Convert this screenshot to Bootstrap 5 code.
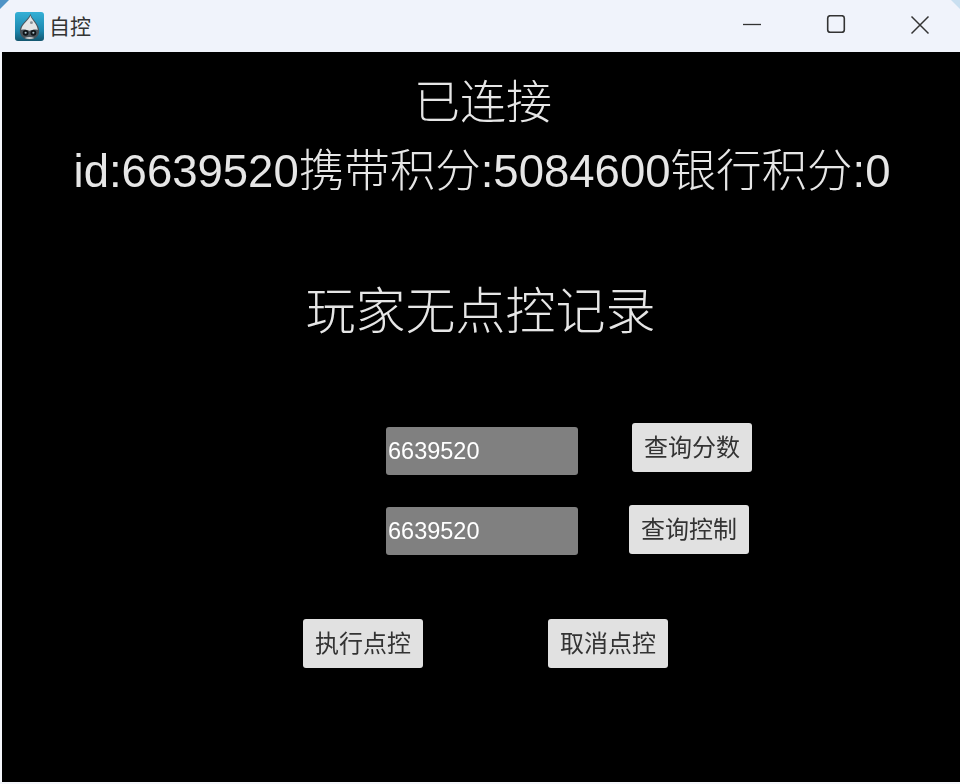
<!DOCTYPE html>
<html lang="zh">
<head>
<meta charset="utf-8">
<title>自控</title>
<link href="https://cdn.jsdelivr.net/npm/bootstrap@5.3.0/dist/css/bootstrap.min.css" rel="stylesheet">
<style>
html,body{margin:0;height:784px;overflow:hidden;background:#f4f6fb;}
body{font-family:"Liberation Sans","Noto Sans CJK SC",sans-serif;}
.app-window{width:960px;height:784px;position:relative;overflow:hidden;}
.corner-tl,.corner-tr{position:absolute;top:0;width:9px;height:9px;}
.corner-tl{left:0;background:#4f93c6;clip-path:polygon(0 0,100% 0,0 100%);}
.corner-tr{right:0;background:#c9dff0;clip-path:polygon(0 0,100% 0,100% 100%);}
.title-strip{height:52px;background:#f0f3fb;padding-left:15px;}
.title-text{font-size:21px;color:#333;margin-left:5px;line-height:1;}
.win-ctrl{height:52px;background:none;border:0;padding:0;}
.win-min{width:86px;}
.win-max{width:82px;}
.win-close{width:86px;margin-right:-3px;}
.stage{height:730px;background:#000;margin-left:2px;color:#e6e6e6;padding-top:24px;filter:blur(.35px);}
.line-a,.line-b,.line-c{text-align:center;margin:0;font-weight:300;white-space:nowrap;}
.line-a{font-size:46px;line-height:52px;margin-left:4px;}
.line-b{font-size:45.5px;line-height:52px;margin-top:18px;margin-left:2px;}
.line-c{font-size:50px;line-height:60px;margin-top:84px;margin-left:-1px;}
.query-row{padding-left:384px;}
.row-one{margin-top:81px;height:52px;}
.row-two{margin-top:30px;height:50px;}
.score-box{width:192px;height:48px;background:#808080;color:#fff;border:0;border-radius:3px;padding:0 2px;font-size:23.5px;font-family:inherit;}
.score-box:focus{outline:0;}
.pale-btn{width:120px;height:49px;background:#e1e1e1;color:#333;border:0;border-radius:3px;padding:0;font-size:24px;font-family:inherit;line-height:1;}
.gap-one{margin-left:54px;}
.gap-two{margin-left:51px;}
.action-row{padding-left:301px;margin-top:64px;}
.gap-three{margin-left:125px;}
</style>
</head>
<body>
<div class="app-window">
  <div class="title-strip d-flex align-items-center">
    <svg width="29" height="29" viewBox="0 0 30 30" aria-hidden="true">
      <defs><linearGradient id="iconBg" x1="0" y1="0" x2="0" y2="1"><stop offset="0" stop-color="#35b0d6"/><stop offset=".65" stop-color="#1c86ad"/><stop offset="1" stop-color="#14566f"/></linearGradient></defs>
      <rect width="30" height="30" rx="3" fill="url(#iconBg)"/>
      <path d="M16 2 C17 7 25 12 25 19.5 C25 25.5 20.5 28.5 15 28.5 C9.5 28.5 5 25.5 5 19.5 C5 12 14 8 16 2Z" fill="#4b545b"/>
      <path d="M16 3.5 C17 8 23.5 12.5 23.5 18.5 C20 17.5 18 18.5 15 19.5 C12 18.5 10 17.5 6.5 18.5 C6.5 12.5 14.5 8.5 16 3.5Z" fill="#e4e6e6"/>
      <path d="M10 27 Q15 24.5 20 27 Q15 29 10 27Z" fill="#cfd3d5"/>
      <circle cx="11" cy="21.5" r="3" fill="#101418"/><circle cx="19" cy="21.5" r="3" fill="#101418"/>
      <circle cx="11" cy="21.5" r="1.1" fill="#a9c2cc"/><circle cx="19" cy="21.5" r="1.1" fill="#a9c2cc"/>
      <circle cx="17" cy="11" r="1.5" fill="#8b9197"/>
    </svg>
    <span class="title-text">自控</span>
    <div class="ms-auto d-flex">
      <button class="win-ctrl win-min d-flex align-items-center justify-content-center" aria-label="最小化"><svg width="20" height="20" viewBox="0 0 20 20"><path d="M1 8.5H19" stroke="#333" stroke-width="1.3" fill="none"/></svg></button>
      <button class="win-ctrl win-max d-flex align-items-center justify-content-center" aria-label="最大化"><svg width="20" height="22" viewBox="0 0 20 22"><rect x="1.7" y="0.7" width="16.6" height="16.6" rx="2.6" stroke="#333" stroke-width="1.6" fill="none"/></svg></button>
      <button class="win-ctrl win-close d-flex align-items-center justify-content-center" aria-label="关闭"><svg width="20" height="22" viewBox="0 0 20 22"><path d="M1.5 1.5L18.5 18.5M18.5 1.5L1.5 18.5" stroke="#333" stroke-width="1.5" fill="none"/></svg></button>
    </div>
  </div>
  <main class="stage">
    <h1 class="line-a">已连接</h1>
    <p class="line-b">id:6639520携带积分:5084600银行积分:0</p>
    <p class="line-c">玩家无点控记录</p>
    <div class="query-row row-one d-flex">
      <input class="score-box align-self-end" value="6639520" aria-label="查询分数">
      <button class="pale-btn gap-one align-self-start">查询分数</button>
    </div>
    <div class="query-row row-two d-flex">
      <input class="score-box align-self-end" value="6639520" aria-label="查询控制">
      <button class="pale-btn gap-two align-self-start">查询控制</button>
    </div>
    <div class="action-row d-flex">
      <button class="pale-btn">执行点控</button>
      <button class="pale-btn gap-three">取消点控</button>
    </div>
  </main>
  <div class="corner-tl"></div><div class="corner-tr"></div>
</div>
<script src="https://cdn.jsdelivr.net/npm/bootstrap@5.3.0/dist/js/bootstrap.bundle.min.js"></script>
</body>
</html>
